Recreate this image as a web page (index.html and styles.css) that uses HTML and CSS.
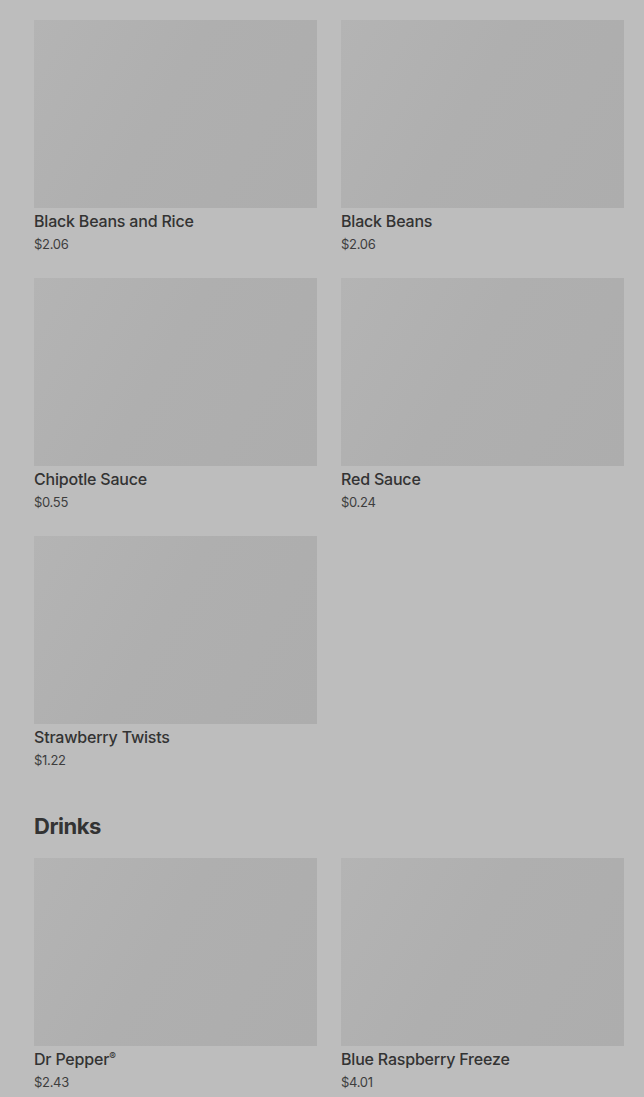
FILE: index.html
```html
<!DOCTYPE html>
<html>
<head>
<meta charset="utf-8">
<link rel="stylesheet" href="styles.css">
</head>
<body>
<main class="menu">
  <section class="section">
    <div class="grid">
      <div class="card"><div class="thumb"></div><div class="name">Black Beans and Rice</div><div class="price">$2.06</div></div>
      <div class="card"><div class="thumb"></div><div class="name">Black Beans</div><div class="price">$2.06</div></div>
      <div class="card"><div class="thumb"></div><div class="name">Chipotle Sauce</div><div class="price">$0.55</div></div>
      <div class="card"><div class="thumb"></div><div class="name">Red Sauce</div><div class="price">$0.24</div></div>
      <div class="card"><div class="thumb"></div><div class="name">Strawberry Twists</div><div class="price">$1.22</div></div>
    </div>
  </section>
  <section class="section">
    <h2 class="heading">Drinks</h2>
    <div class="grid">
      <div class="card"><div class="thumb"></div><div class="name">Dr Pepper<span class="reg">®</span></div><div class="price">$2.43</div></div>
      <div class="card"><div class="thumb"></div><div class="name">Blue Raspberry Freeze</div><div class="price">$4.01</div></div>
    </div>
  </section>
</main>
</body>
</html>
```
FILE: styles.css
```css
html, body {
  margin: 0;
  padding: 0;
  background: #bdbdbd;
  overflow: hidden;
}
body {
  font-family: Inter, Roboto, "Liberation Sans", sans-serif;
  color: #333;
}
.menu {
  padding: 20px 20px 0 34px;
  width: 590px;
}
.grid {
  display: grid;
  grid-template-columns: 283px 283px;
  column-gap: 24px;
  row-gap: 25px;
}
.thumb {
  height: 188px;
  background: linear-gradient(120deg, #b4b4b4 0%, #afafaf 45%, #adadad 100%);
}
.name {
  margin-top: 3px;
  font-size: 16px;
  line-height: 20px;
  font-weight: 500;
  letter-spacing: -0.2px;
  color: #333;
}
.reg {
  font-size: 10px;
  vertical-align: 5px;
  line-height: 0;
}
.price {
  margin-top: 4px;
  font-size: 13px;
  line-height: 18px;
  letter-spacing: -0.3px;
  color: #3d3d3d;
}
.heading {
  margin: 43px 0 18px;
  font-size: 22px;
  line-height: 28px;
  font-weight: 700;
  letter-spacing: -0.5px;
  color: #333;
}
```
